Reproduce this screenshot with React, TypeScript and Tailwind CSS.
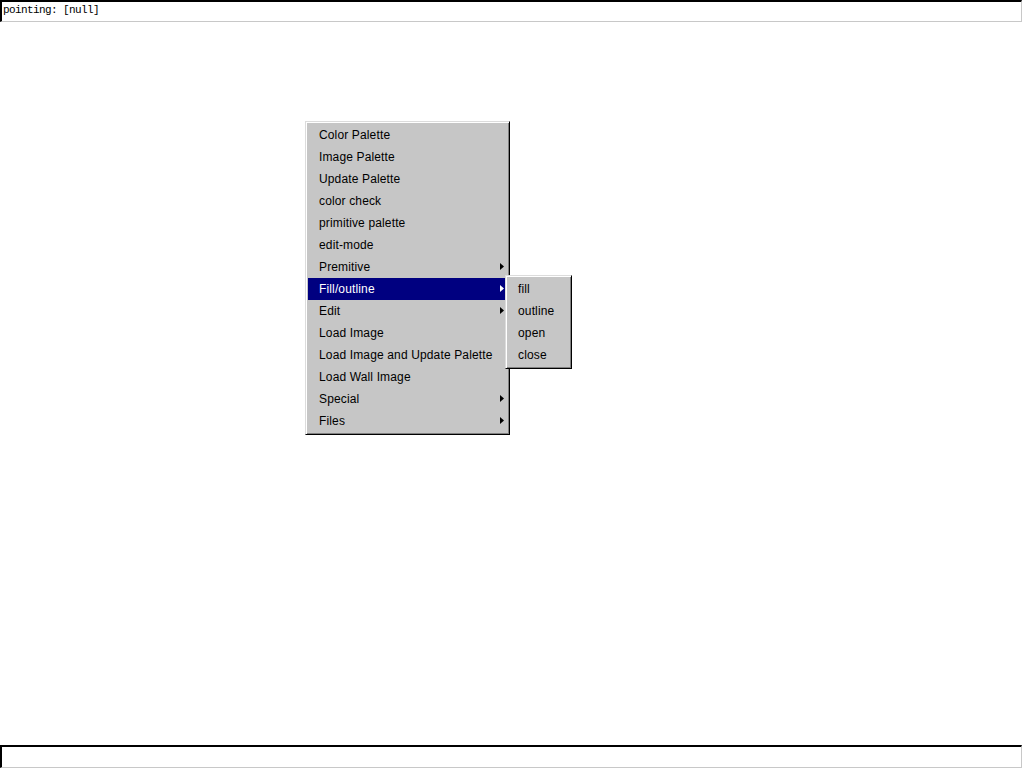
import React from "react";

const items: { label: string; sub?: boolean; active?: boolean }[] = [
  { label: "Color Palette" },
  { label: "Image Palette" },
  { label: "Update Palette" },
  { label: "color check" },
  { label: "primitive palette" },
  { label: "edit-mode" },
  { label: "Premitive", sub: true },
  { label: "Fill/outline", sub: true, active: true },
  { label: "Edit", sub: true },
  { label: "Load Image" },
  { label: "Load Image and Update Palette" },
  { label: "Load Wall Image" },
  { label: "Special", sub: true },
  { label: "Files", sub: true },
];

const subItems = ["fill", "outline", "open", "close"];

function Arrow({ white }: { white?: boolean }) {
  return (
    <svg width="4" height="7" viewBox="0 0 4 7" className="absolute right-[3px] top-[7px]">
      <path d="M0 0 L4 3.5 L0 7 Z" fill={white ? "#fff" : "#000"} />
    </svg>
  );
}

export default function App() {
  return (
    <div className="flex h-screen w-full flex-col bg-white font-['Liberation_Sans',Arial,sans-serif]">
      <div className="h-[22px] w-[1022px] shrink-0 border-l-2 border-t-2 border-r border-b border-l-black border-t-black border-r-[#c8c8c8] border-b-[#c8c8c8] bg-white px-[1px] font-['Liberation_Mono',monospace] text-[11px] leading-[16px] tracking-[-0.6px] text-black">
        pointing: [null]
      </div>

      <div className="relative flex-1">
        <div className="absolute left-[305px] top-[99px] w-[205px] border-l border-t border-r border-b border-l-[#dcdcdc] border-t-[#dcdcdc] border-r-black border-b-black bg-[#c6c6c6] shadow-[inset_1px_1px_0_#fff,inset_-1px_-1px_0_#808080] p-[2px] text-[12px] tracking-[0.14px] text-black">
          {items.map((it) => (
            <div
              key={it.label}
              className={
                "relative h-[22px] pl-[11px] leading-[22px] whitespace-nowrap " +
                (it.active ? "bg-[#000080] text-white" : "")
              }
            >
              {it.label}
              {it.sub && <Arrow white={it.active} />}
            </div>
          ))}
        </div>

        <div className="absolute left-[505px] top-[253px] w-[67px] border-l border-t border-r border-b border-l-[#dcdcdc] border-t-[#dcdcdc] border-r-black border-b-black bg-[#c6c6c6] shadow-[inset_1px_1px_0_#fff,inset_-1px_-1px_0_#808080] p-[2px] text-[12px] tracking-[0.14px] text-black">
          {subItems.map((s) => (
            <div key={s} className="h-[22px] pl-[10px] leading-[22px]">
              {s}
            </div>
          ))}
        </div>
      </div>

      <div className="h-[23px] w-[1022px] shrink-0 border-l-2 border-t-2 border-r border-b border-l-black border-t-black border-r-[#c8c8c8] border-b-[#c8c8c8] bg-white" />
    </div>
  );
}
